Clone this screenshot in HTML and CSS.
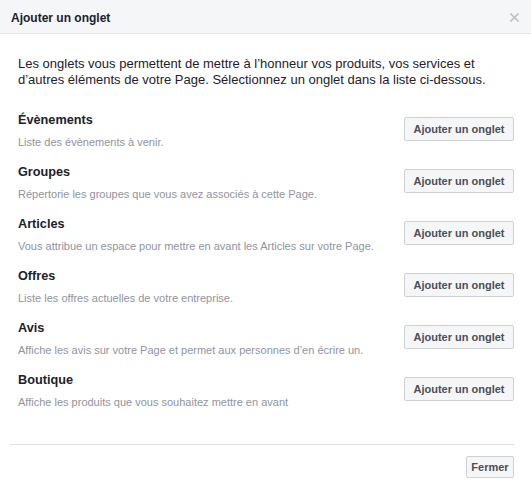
FILE: index.html
```html
<!DOCTYPE html>
<html lang="fr">
<head>
<meta charset="utf-8">
<title>Ajouter un onglet</title>
<link rel="stylesheet" href="styles.css">
</head>
<body>
<div class="dialog">
  <div class="dialog-header">
    <h2 class="dialog-title">Ajouter un onglet</h2>
    <button class="close" aria-label="Fermer">
      <svg width="9" height="9" viewBox="0 0 9 9"><path d="M1 1 L8 8 M8 1 L1 8" stroke="#bcc0c4" stroke-width="1.6" stroke-linecap="square"/></svg>
    </button>
  </div>
  <div class="dialog-body">
    <p class="intro">Les onglets vous permettent de mettre à l’honneur vos produits, vos services et d’autres éléments de votre Page. Sélectionnez un onglet dans la liste ci-dessous.</p>
    <ul class="tabs">
      <li class="tab">
        <div class="tab-text">
          <div class="tab-name">Évènements</div>
          <div class="tab-desc">Liste des évènements à venir.</div>
        </div>
        <button class="btn">Ajouter un onglet</button>
      </li>
      <li class="tab">
        <div class="tab-text">
          <div class="tab-name">Groupes</div>
          <div class="tab-desc">Répertorie les groupes que vous avez associés à cette Page.</div>
        </div>
        <button class="btn">Ajouter un onglet</button>
      </li>
      <li class="tab">
        <div class="tab-text">
          <div class="tab-name">Articles</div>
          <div class="tab-desc">Vous attribue un espace pour mettre en avant les Articles sur votre Page.</div>
        </div>
        <button class="btn">Ajouter un onglet</button>
      </li>
      <li class="tab">
        <div class="tab-text">
          <div class="tab-name">Offres</div>
          <div class="tab-desc">Liste les offres actuelles de votre entreprise.</div>
        </div>
        <button class="btn">Ajouter un onglet</button>
      </li>
      <li class="tab">
        <div class="tab-text">
          <div class="tab-name">Avis</div>
          <div class="tab-desc">Affiche les avis sur votre Page et permet aux personnes d’en écrire un.</div>
        </div>
        <button class="btn">Ajouter un onglet</button>
      </li>
      <li class="tab">
        <div class="tab-text">
          <div class="tab-name">Boutique</div>
          <div class="tab-desc">Affiche les produits que vous souhaitez mettre en avant</div>
        </div>
        <button class="btn">Ajouter un onglet</button>
      </li>
    </ul>
  </div>
  <div class="dialog-footer">
    <button class="btn btn-small">Fermer</button>
  </div>
</div>
</body>
</html>
```
FILE: styles.css
```css
* { box-sizing: border-box; }
html, body { margin: 0; padding: 0; background: #fff; }
body {
  font-family: "Liberation Sans", Arial, Helvetica, sans-serif;
  color: #1d2129;
  width: 531px;
  height: 486px;
  overflow: hidden;
}
.dialog { width: 531px; }
.dialog-header {
  height: 34px;
  background: #f5f6f7;
  border-bottom: 1px solid #e5e5e5;
  display: flex;
  justify-content: space-between;
  align-items: flex-start;
  padding: 10px 11px 0 11px;
}
.dialog-title {
  margin: 0;
  font-size: 12px;
  line-height: 16px;
  font-weight: bold;
  color: #1d2129;
}
.close {
  border: 0;
  background: none;
  padding: 0;
  margin-top: 3px;
  margin-right: 1px;
  width: 9px;
  height: 9px;
  display: flex;
}
.dialog-body {
  padding: 22px 17px 0 18px;
}
.intro {
  margin: 0 0 24px 0;
  font-size: 13px;
  line-height: 16px;
}
.tabs { list-style: none; margin: 0; padding: 0; }
.tab {
  display: flex;
  justify-content: space-between;
  align-items: flex-start;
  padding-bottom: 14px;
}
.tab-name {
  font-size: 12.7px;
  line-height: 16px;
  font-weight: bold;
  color: #1d2129;
}
.tab-desc {
  margin-top: 6px;
  font-size: 11px;
  line-height: 16px;
  color: #90949c;
}
.btn {
  font-family: "Liberation Sans", Arial, Helvetica, sans-serif;
  font-size: 11px;
  font-weight: bold;
  color: #4b4f56;
  background: #f5f6f7;
  border: 1px solid #ced0d4;
  border-radius: 2px;
  height: 24px;
  line-height: 22px;
  padding: 0;
  width: 110px;
  text-align: center;
  margin-top: 5px;
}
.dialog-footer {
  margin: 20px 17px 0 10px;
  border-top: 1px solid #dddfe2;
  padding-top: 11px;
  display: flex;
  justify-content: flex-end;
}
.btn-small {
  margin-top: 0;
  width: 48px;
  height: 22px;
  line-height: 20px;
}
```
